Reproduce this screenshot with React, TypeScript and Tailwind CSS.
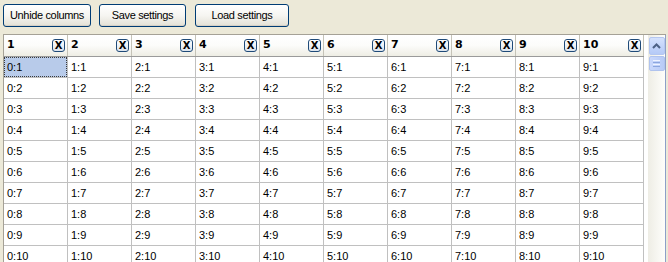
import React from "react";

const cols = Array.from({ length: 10 }, (_, i) => i);
const rows = Array.from({ length: 10 }, (_, i) => i + 1);

function XpButton({ label, w }: { label: string; w: string }) {
  return (
    <button
      className={`${w} h-[23px] rounded-[3px] border border-[#003C74] bg-gradient-to-b from-[#FFFFFF] via-[#F6F5F1] to-[#E3E1D6] text-[11px] tracking-[-0.35px] text-black leading-none shadow-[inset_0_-1px_0_#D6D0C5]`}
    >
      {label}
    </button>
  );
}

function XBox() {
  return (
    <div className="w-[13px] h-[13px] rounded-[3px] border border-[#1F4A78] bg-gradient-to-b from-[#FFFFFF] to-[#DCE4EE] flex items-center justify-center text-[10px] font-bold leading-none text-black" style={{ fontFamily: '"DejaVu Sans", sans-serif' }}>
      X
    </div>
  );
}

export default function App() {
  return (
    <div
      className="w-[668px] h-[262px] overflow-hidden bg-[#ECE9D8] text-[11px] text-black"
      style={{ fontFamily: 'Tahoma, "Liberation Sans", Arial, sans-serif' }}
    >
      <div className="flex pt-[4px] pl-[3px]">
        <XpButton label="Unhide columns" w="w-[88px]" />
        <div className="w-[8px]" />
        <XpButton label="Save settings" w="w-[87px]" />
        <div className="w-[9px]" />
        <XpButton label="Load settings" w="w-[94px]" />
      </div>
      <div className="mt-[7px] ml-[3px] w-[663px] flex border-l border-t border-[#A5A196] bg-white">
        <div className="w-[640px] flex flex-col">
          <div className="flex h-[22px] border-b border-[#9A9A9A] bg-gradient-to-b from-[#FFFFFF] via-[#FCFCFA] to-[#EEEDE4]">
            {cols.map((c) => (
              <div
                key={c}
                className="w-[64px] h-full border-r border-[#C5C3B8] flex items-center justify-between pl-[3px] pr-[2px]"
              >
                <span className="font-bold text-[11px]" style={{ fontFamily: '"DejaVu Sans", sans-serif' }}>{c + 1}</span>
                <XBox />
              </div>
            ))}
          </div>
          {rows.map((r) => (
            <div key={r} className="flex h-[21px] border-b border-[#C0C0C0]">
              {cols.map((c) => {
                const sel = r === 1 && c === 0;
                return (
                  <div
                    key={c}
                    className="w-[64px] h-full border-r border-[#C0C0C0] flex items-center"
                  >
                    {sel ? (
                      <div className="w-full h-full bg-[#B8CBEA] outline-1 outline-dotted outline-[#3A3A3A] -outline-offset-1 flex items-center pl-[3px]">
                        {`${c}:${r}`}
                      </div>
                    ) : (
                      <span className="pl-[3px]">{`${c}:${r}`}</span>
                    )}
                  </div>
                );
              })}
            </div>
          ))}
        </div>
        <div className="w-[4px] bg-white" />
        <div className="w-[18px] h-[230px] flex flex-col items-center pt-[2px] bg-gradient-to-r from-[#EEEDE5] to-[#FEFEFB] border-r border-[#8CA0C8]">
          <div className="w-[16px] h-[18px] rounded-[2px] border border-[#B5C7F0] bg-gradient-to-b from-[#D4E1FD] to-[#B5CAF7] flex items-center justify-center">
            <svg width="9" height="6" viewBox="0 0 9 6">
              <path d="M1 5 L4.5 1.5 L8 5" stroke="#4D6185" strokeWidth="2" fill="none" />
            </svg>
          </div>
          <div className="mt-[1px] w-[16px] h-[15px] rounded-[2px] border border-[#B0C3EE] bg-gradient-to-r from-[#C9D8FC] to-[#B8CBF6] flex flex-col items-center justify-center gap-[1px]">
            <div className="w-[7px] h-[1px] bg-[#EEF3FF]" />
            <div className="w-[7px] h-[1px] bg-[#8CA6DE]" />
            <div className="w-[7px] h-[1px] bg-[#EEF3FF]" />
            <div className="w-[7px] h-[1px] bg-[#8CA6DE]" />
          </div>
        </div>
      </div>
    </div>
  );
}
